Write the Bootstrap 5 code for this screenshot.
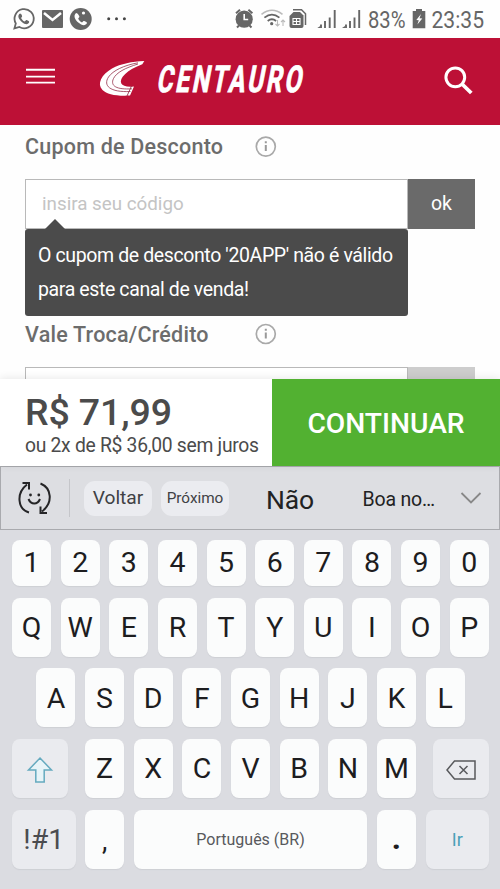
<!DOCTYPE html>
<html lang="pt-BR">
<head>
<meta charset="utf-8">
<meta name="viewport" content="width=device-width, initial-scale=1">
<title>Centauro</title>
<link href="https://cdn.jsdelivr.net/npm/bootstrap@5.3.0/dist/css/bootstrap.min.css" rel="stylesheet">
<style>
body{font-family:Roboto,"Liberation Sans",sans-serif;width:500px;height:889px;overflow:hidden;background:#fefefe;color:#4b4b4b}
svg{display:block;flex:none;overflow:visible}
.statusbar{height:38px;background:#fefefe}
.brandbar{height:87px;background:#bd1036}
.checkout{height:254px;padding:0 25px}
.field-head{height:54px}
.field-head.second{height:51px}
.coupon{height:50px}
.coupon-input{width:383px;border:1px solid #b9b9b9;background:#fff;color:#c4c4c4;font-size:18.8px;padding-left:16px}
.coupon-ok{width:67px;background:#6a6a6a;color:#fff;font-size:19.5px}
.coupon-ok.off{background:#cdcdcd}
.tip{width:383px;height:87px;background:#4b4b4b;border-radius:3px;padding:9px 12.5px}
.tip::before{content:"";position:absolute;left:20px;top:-10px;border:solid transparent;border-width:0 10.5px 10px;border-bottom-color:#4b4b4b}
.paybar{height:87px;background:#fff;box-shadow:0 -1px 8px rgba(0,0,0,.09)}
.amount{width:272px;padding:14px 0 0 25px}
.go{background:#52b131;color:#fff;font-size:28.2px;font-weight:500;padding-top:3px}
.suggest{height:64px;background:#dddee2;border:1px solid #a9aaae}
.pill{width:68px;height:35px;border-radius:11px;background:#ebecf0;color:#404144;font-size:19.2px}
.pill.small-text{font-size:15.3px;margin-left:9px}
.keys{height:359px;background:#dbdce1;padding:10px 11px 0 12px}
.keyrow{gap:9.65px;margin-bottom:11.7px}
.keycap{width:39px;height:59px;border-radius:8px;background:#fbfcfc;color:#1d1d1f;font-size:28.5px;line-height:1;padding-top:2px;display:flex;align-items:center;justify-content:center;flex:none;box-shadow:0 1px 1px rgba(90,95,110,.10)}
.keycap.num{height:46px;padding-top:1px}
.keycap.fn{background:#eaebef;color:#4b4c50}
.keycap.shift{width:56px;margin-right:7.5px}
.keycap.erase{width:56px;margin-left:7.5px}
.keycap.wide{width:63.5px}
.keycap.enter{font-size:18px;color:#4ba0b8}
.keycap.space{width:233.5px;font-size:16px;color:#58595c}
.keycap.dot{font-weight:900}
.keycap.comma{font-size:27px;padding-top:4px}
</style>
<script src="https://cdn.jsdelivr.net/npm/bootstrap@5.3.0/dist/js/bootstrap.bundle.min.js"></script>
</head>
<body>
<header>
  <div class="statusbar d-flex align-items-center">
    <svg width="235" height="38" viewBox="0 0 235 38" fill="none" stroke="#666">
      <path d="M14.4 28.4 15.8 23.4A9.6 9.6 0 1 1 19.4 27Z" stroke-width="1.8"/>
      <path d="M20 13.5c-3 1.8-1.6 5.5 1.8 8.4 3.5 2.9 6.5 3 7.4.1.2-.8-2.7-2.3-3.2-1.8l-1.3 1.3c-1.8-.7-2.9-1.9-3.6-3.5l1-1.4c.3-.6-.8-3.3-2.1-3.1Z" fill="#666" stroke="none"/>
      <rect x="42" y="10" width="21" height="18" rx="1" fill="#666" stroke="none"/>
      <path d="m44 13 8.500 7 8.500-7" stroke="#fff" stroke-width="2.500"/>
      <circle cx="80.700" cy="19" r="11" fill="#666" stroke="none"/>
      <path d="M76 13c-3 3-1 6.700 2.300 9.500 3.400 3 7.100 3.800 8.700.5.300-.8-2.900-2.500-3.500-2l-1.500 1.400c-2-.8-3.100-2-3.800-3.900l1.200-1.500c.4-.7-2-4.300-3.400-4Z" fill="#fff" stroke="none"/>
      <circle cx="83.500" cy="13" r="1.600" fill="#fff" stroke="none"/>
      <g fill="#444" stroke="none"><circle cx="108.700" cy="18.700" r="1.500"/><circle cx="116.500" cy="18.700" r="1.500"/><circle cx="124.400" cy="18.700" r="1.500"/></g>
    </svg>
    <svg width="129" height="38" viewBox="235 0 129 38" fill="none" stroke="#666">
      <circle cx="244.200" cy="19.200" r="8.600" fill="#666" stroke="none"/>
      <path d="m236 13.200 4-3.400M252.400 13.200l-4-3.400M239 25.500l-2 2M249.500 25.500l2 2" stroke-width="2"/>
      <path d="M244.200 14v5.500h4" stroke="#fff" stroke-width="1.600"/>
      <path d="M261.500 14.300q10.500-8 21 0" stroke="#bbb" stroke-width="1.600"/>
      <path d="M264.400 17.600q7.500-6 15 0M267.700 21q4.200-3.400 8.400 0" stroke-width="1.800"/>
      <circle cx="271.700" cy="23.700" r="1.600" fill="#666" stroke="none"/>
      <path d="M277.500 20v6m-2-2 2 2 2-2M283 26v-6m-2 2 2-2 2 2" stroke="#bbb" stroke-width="1.100"/>
      <path d="M293 9.700h8.500l4 4V25" stroke-width="1.500"/>
      <path d="M293.500 12h6.500l3.500 3.500V26q0 2-2 2h-10q-2 0-2-2V16Z" fill="#666" stroke="none"/>
      <path d="M293 18.500h7v6h-7ZM296.500 18.500v6M293 21.500h7" stroke="#fff" stroke-width="1.100"/>
      <path d="M321 28v-3.500M325 28v-7M329.700 28V17.500M334.700 28V10M346 28v-3.500M350 28v-7M354.500 28V17.500M359.200 28V10" stroke-width="1.900"/>
      <path d="M317.300 28l3-2v2ZM342 28l3-2v2Z" fill="#666" stroke="none"/>
    </svg>
    <svg width="136" height="38" viewBox="364 0 136 38">
      <g fill="#666" font-size="24">
        <text x="368" y="28" textLength="37.500" lengthAdjust="spacingAndGlyphs">83%</text>
        <text x="431.500" y="28" textLength="52.500" lengthAdjust="spacingAndGlyphs">23:35</text>
      </g>
      <path d="M416 9h6v2h3.300v17.300H412.700V11h3.300Z" fill="#666"/>
      <path d="m421 14-4.700 6 2.500.3-1.400 4.200 4.900-6-2.800-.3Z" fill="#fff"/>
    </svg>
  </div>
  <nav class="brandbar d-flex align-items-center" aria-label="Principal">
    <svg width="500" height="87" viewBox="0 38 500 87">
      <path d="M26 69.700h29M26 76.600h29M26 82.600h29" stroke="#fff" stroke-width="1.900"/>
      <path d="M144.300 61C132 61.500 121 63.700 112 68.500 101.500 74.500 96.500 84 102.500 90c4.500 4.500 13 6.200 27.500 5.600L134 86.600c-7 .7-11.500-.5-12.700-3-2.500-5.500 6-14 21-19.400Z" fill="#fff"/>
      <path d="M138 62.800c-14 2.500-25 7.700-29.500 14.200-5.500 8.500 1 15.500 22 14.500M138 64c-13 4-21.500 8.500-24.500 14.500-3.500 7.500 3 11.300 18.500 10.300" fill="none" stroke="#96304a" stroke-width=".8"/>
      <path d="m131.500 86-4.500 10" stroke="#96304a" stroke-width=".9"/>
      <text transform="translate(156 92) skewX(-11) scale(.66 1)" font-size="37" font-weight="700" fill="#fff" stroke="#fff" stroke-width=".9" textLength="219" lengthAdjust="spacing">CENTAURO</text>
      <circle cx="455.300" cy="77.300" r="9.400" fill="none" stroke="#fff" stroke-width="3"/>
      <path d="m462 84 9.300 9" stroke="#fff" stroke-width="3.800"/>
    </svg>
  </nav>
</header>

<main class="checkout">
  <div class="field-head">
    <svg width="260" height="44" viewBox="25 125 260 44"><text x="25" y="154.300" textLength="198" font-size="21.500" font-weight="500" fill="#6c6c6c">Cupom de Desconto</text><circle cx="265.800" cy="146.600" r="9.500" fill="none" stroke="#a9a9a9" stroke-width="1.700"/><path d="M265.800 145v6M265.800 141.300v2" stroke="#999" stroke-width="2"/></svg>
  </div>
  <div class="coupon d-flex">
    <div class="coupon-input d-flex align-items-center">insira seu código</div>
    <div class="coupon-ok d-flex align-items-center justify-content-center">ok</div>
  </div>
  <div class="tip position-relative">
    <svg width="358" height="68" viewBox="0 0 358 68" fill="#fff" font-size="19.500"><text x="0" y="23.500" textLength="355">O cupom de desconto '20APP' não é válido</text><text x="0" y="57.500" textLength="211">para este canal de venda!</text></svg>
  </div>
  <div class="field-head second">
    <svg width="260" height="48" viewBox="25 316 260 48"><text x="25" y="342" textLength="183.500" font-size="21.500" font-weight="500" fill="#6c6c6c">Vale Troca/Crédito</text><circle cx="265.800" cy="334" r="9.500" fill="none" stroke="#a9a9a9" stroke-width="1.700"/><path d="M265.800 332.400v6M265.800 328.700v2" stroke="#999" stroke-width="2"/></svg>
  </div>
  <div class="coupon d-flex">
    <div class="coupon-input"></div><div class="coupon-ok off"></div>
  </div>
</main>

<section class="paybar d-flex position-relative">
  <div class="amount">
    <svg width="247" height="73" viewBox="25 393 247 73" fill="#4b4b4b"><text x="25" y="425" textLength="147" font-size="37.500" font-weight="500">R$ 71,99</text><text x="25" y="452" textLength="234" font-size="19.300">ou 2x de R$ 36,00 sem juros</text></svg>
  </div>
  <div class="go flex-grow-1 d-flex align-items-center justify-content-center">CONTINUAR</div>
</section>

<section class="suggest d-flex align-items-center">
  <svg width="83" height="62" viewBox="1 467 83 62" fill="none" stroke="#252527" stroke-width="2">
    <path d="M29 512.500c-11-3-13.500-19-2-28M22.500 483h6.500v6.500M40.500 483.500c11 4.500 13 19 1.500 28M47 513h-6.500v-6.500"/>
    <path d="M28.500 499c2.500 6 9 6 11.500 0"/><circle cx="30.500" cy="495" r="1.400" fill="#252527" stroke="none"/><circle cx="38.800" cy="495" r="1.400" fill="#252527" stroke="none"/>
    <path d="M69.500 479v38" stroke="#c5c6ca" stroke-width="1"/>
  </svg>
  <div class="pill d-flex align-items-center justify-content-center">Voltar</div>
  <div class="pill small-text d-flex align-items-center justify-content-center">Próximo</div>
  <svg width="270" height="62" viewBox="229 467 270 62" fill="#222"><text x="266" y="508.500" textLength="48" font-size="26.500">Não</text><text x="362.500" y="505.500" textLength="72.500" font-size="19.500">Boa no…</text><path d="m461.500 493 9.500 9.500 9.500-9.500" fill="none" stroke="#888" stroke-width="1.800"/></svg>
</section>

<section class="keys">
  <div class="keyrow d-flex"><div class="keycap num">1</div><div class="keycap num">2</div><div class="keycap num">3</div><div class="keycap num">4</div><div class="keycap num">5</div><div class="keycap num">6</div><div class="keycap num">7</div><div class="keycap num">8</div><div class="keycap num">9</div><div class="keycap num">0</div></div>
  <div class="keyrow d-flex"><div class="keycap">Q</div><div class="keycap">W</div><div class="keycap">E</div><div class="keycap">R</div><div class="keycap">T</div><div class="keycap">Y</div><div class="keycap">U</div><div class="keycap">I</div><div class="keycap">O</div><div class="keycap">P</div></div>
  <div class="keyrow d-flex justify-content-center"><div class="keycap">A</div><div class="keycap">S</div><div class="keycap">D</div><div class="keycap">F</div><div class="keycap">G</div><div class="keycap">H</div><div class="keycap">J</div><div class="keycap">K</div><div class="keycap">L</div></div>
  <div class="keyrow d-flex">
    <div class="keycap fn shift"><svg width="26" height="28" viewBox="0 0 26 28"><path d="M13 2 24.500 14h-7.300v12H8.800V14H1.500Z" fill="#e7f4f8" stroke="#65aabf" stroke-width="1.500"/></svg></div>
    <div class="keycap">Z</div><div class="keycap">X</div><div class="keycap">C</div><div class="keycap">V</div><div class="keycap">B</div><div class="keycap">N</div><div class="keycap">M</div>
    <div class="keycap fn erase"><svg width="30" height="20" viewBox="0 0 30 20" fill="none" stroke="#58595c" stroke-width="1.500"><path d="M1 10 8.500 1h20.500v18H8.500ZM13.500 6l8 8m0-8-8 8"/></svg></div>
  </div>
  <div class="keyrow d-flex">
    <div class="keycap fn wide">!#1</div><div class="keycap comma">,</div>
    <div class="keycap space">Português (BR)</div>
    <div class="keycap dot">.</div>
    <div class="keycap fn wide enter">Ir</div>
  </div>
</section>
</body>
</html>
